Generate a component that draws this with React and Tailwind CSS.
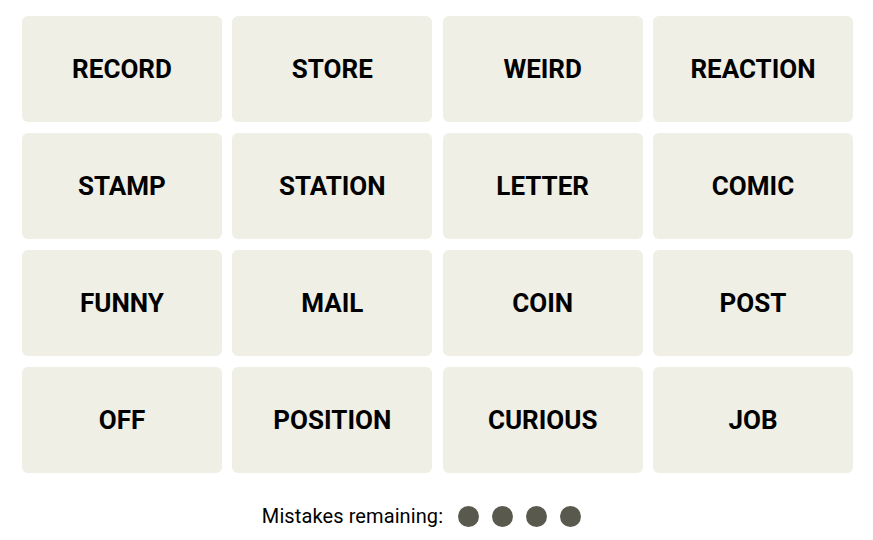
import React from 'react';

const words = [
  'RECORD', 'STORE', 'WEIRD', 'REACTION',
  'STAMP', 'STATION', 'LETTER', 'COMIC',
  'FUNNY', 'MAIL', 'COIN', 'POST',
  'OFF', 'POSITION', 'CURIOUS', 'JOB',
];

export default function App() {
  return (
    <div className="w-[873px] h-[540px] bg-white pt-[16px] pl-[22px]" style={{ fontFamily: 'Roboto, "Liberation Sans", sans-serif' }}>
      <div className="grid grid-cols-4 w-[831px] gap-x-[10.33px] gap-y-[11px]">
        {words.map((w) => (
          <div
            key={w}
            className="h-[106px] rounded-[6px] bg-[#efefe6] flex items-center justify-center text-[26px] font-bold text-black"
          >
            {w}
          </div>
        ))}
      </div>

      {/* mistakes */}
      <div className="flex items-center w-[831px] justify-center pr-[32px] mt-[28px]">
        <span className="text-[20px] text-black tracking-[0.1px]">Mistakes remaining:</span>
        <div className="flex gap-[13px] ml-[15px]">
          <span className="w-[21px] h-[21px] rounded-full bg-[#5a594e]" />
          <span className="w-[21px] h-[21px] rounded-full bg-[#5a594e]" />
          <span className="w-[21px] h-[21px] rounded-full bg-[#5a594e]" />
          <span className="w-[21px] h-[21px] rounded-full bg-[#5a594e]" />
        </div>
      </div>
    </div>
  );
}
